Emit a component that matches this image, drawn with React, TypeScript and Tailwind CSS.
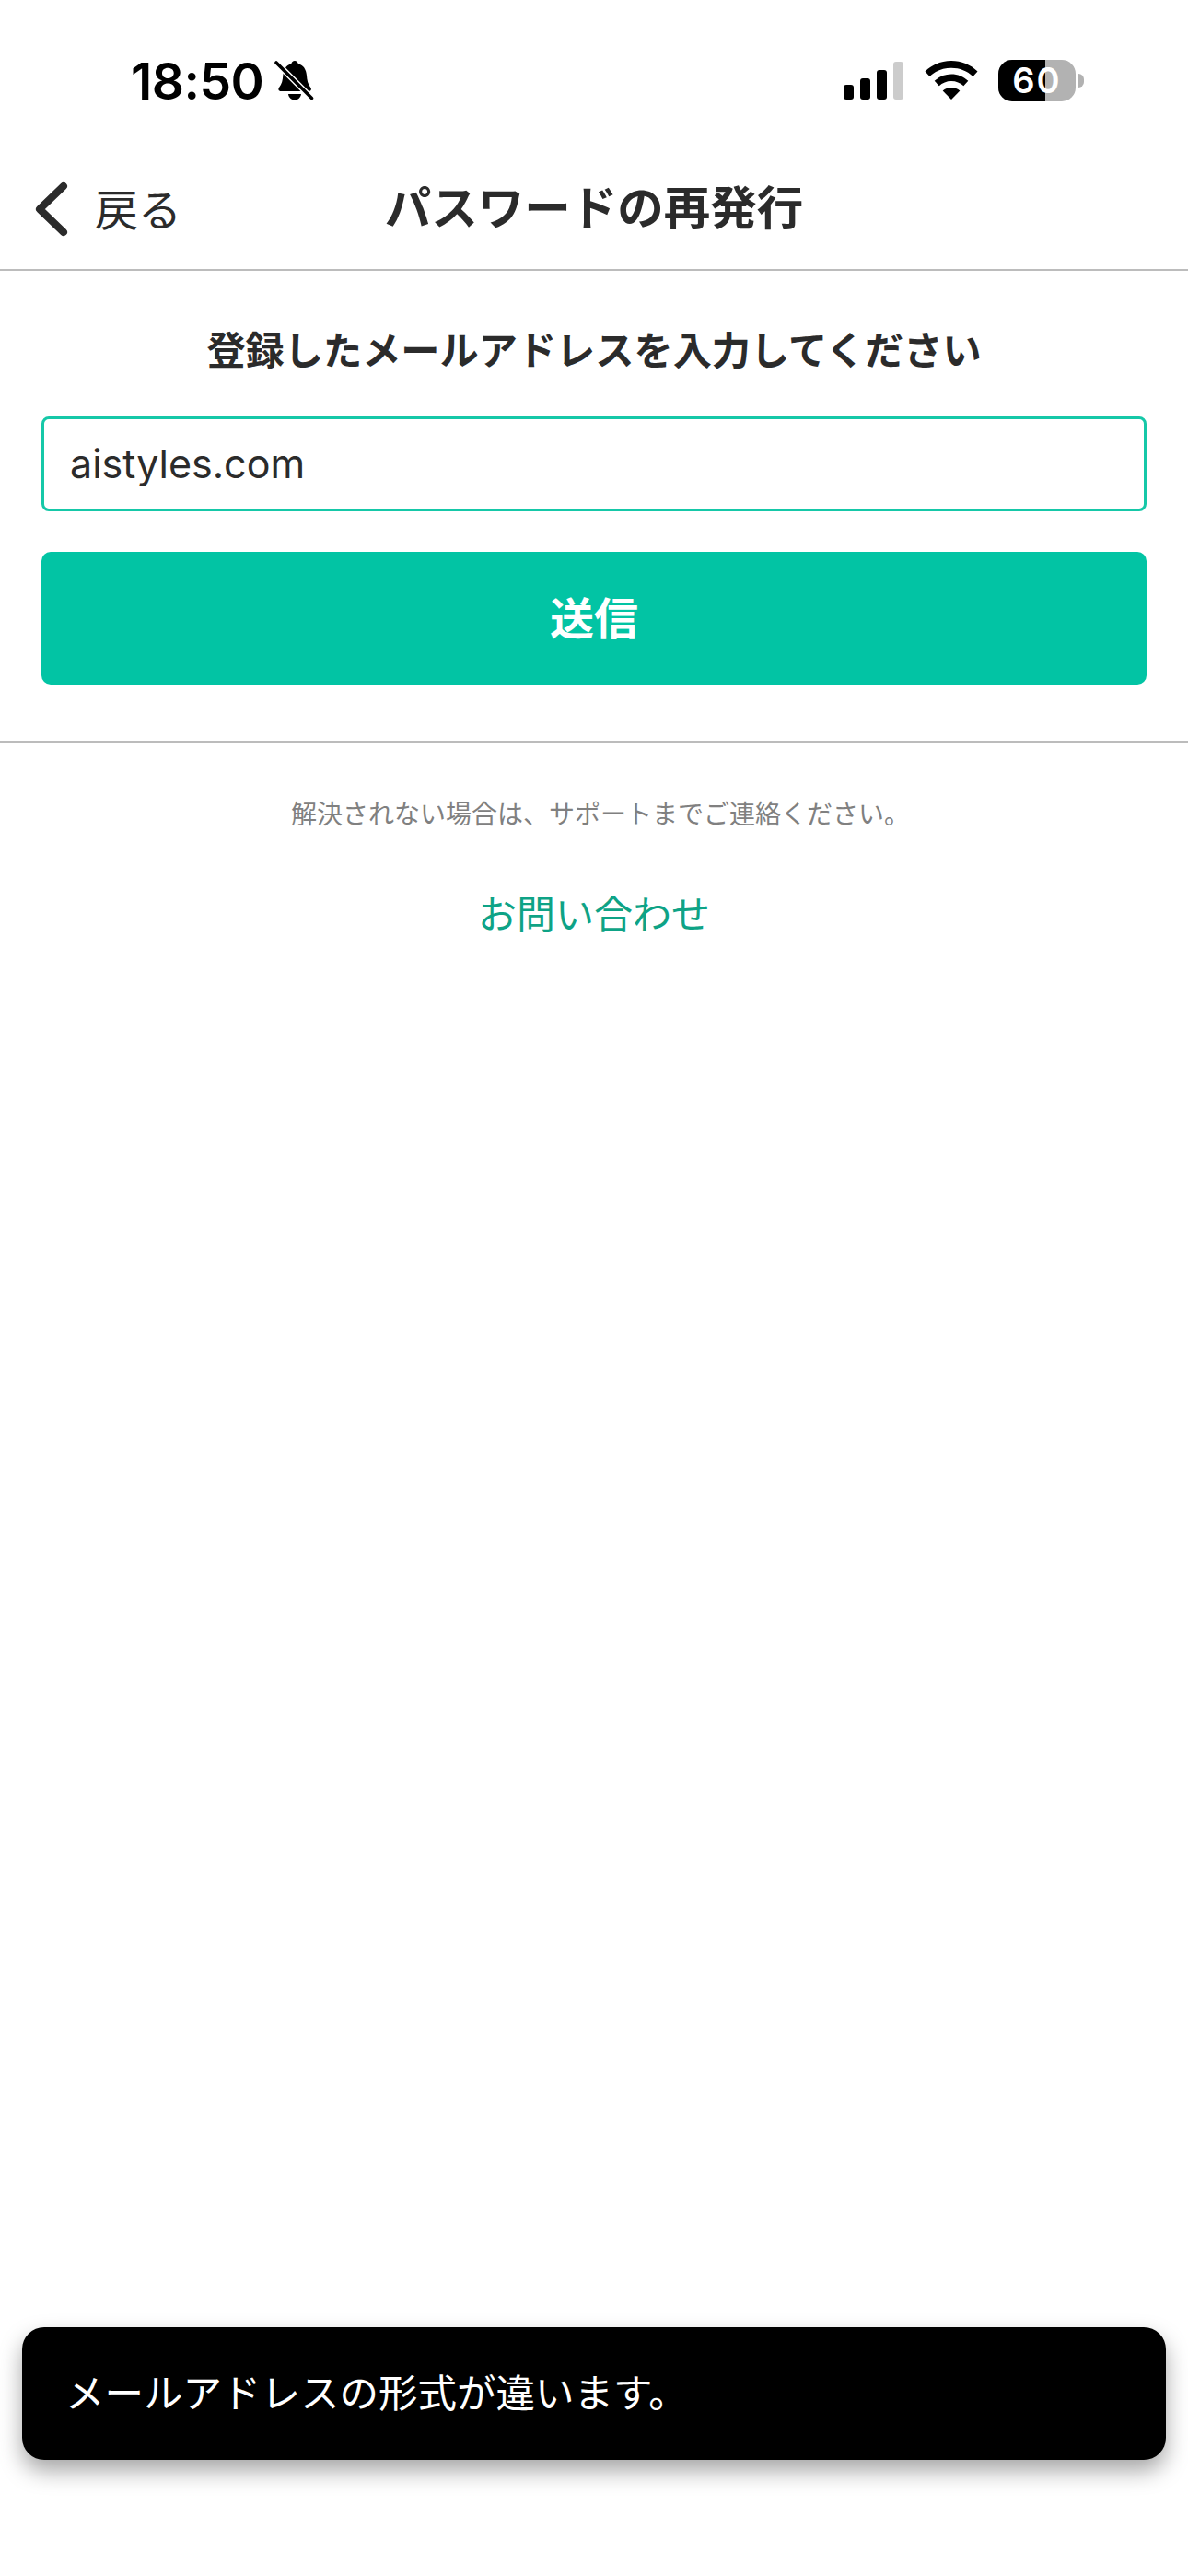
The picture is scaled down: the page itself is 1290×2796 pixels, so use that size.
import React from 'react';

const jp = 'font-["Inter","Noto_Sans_CJK_JP",sans-serif]';

const MutedBell = () => (
  <svg width="44" height="46" viewBox="0 0 44 46" className="text-black">
    <path
      d="M22 1c2 0 3.400 1.300 3.800 3.200 6 1.500 8.700 6.500 9.200 12.800.3 5 1.200 9 4.300 13 1.300 1.700.5 4-2 4H7c-2.500 0-3.300-2.300-2-4 3.100-4 4-8 4.300-13 .5-6.300 3.200-11.300 9-12.800C18.700 2.300 20 1 22 1z"
      fill="currentColor"
    />
    <path d="M15 37h14c-.6 4-3.400 6.500-7 6.500S15.600 41 15 37z" fill="currentColor" />
    <path d="M1 2l41 41" stroke="white" strokeWidth="6.500" />
    <path d="M2 3l38.500 38.500" stroke="currentColor" strokeWidth="3.600" strokeLinecap="round" />
  </svg>
);

const SignalBars = () => (
  <div className="flex items-end gap-[7px] mr-[1px]">
    <div className="w-[11px] h-[16px] rounded-[3px] bg-black" />
    <div className="w-[11px] h-[23px] rounded-[3px] bg-black" />
    <div className="w-[11px] h-[32px] rounded-[3px] bg-black" />
    <div className="w-[11px] h-[41px] rounded-[3px] bg-[#cccccc]" />
  </div>
);

const Wifi = () => (
  <svg width="58" height="42" viewBox="0 0 58 42">
    <path d="M29 0c11 0 21 4.200 28.500 11.500l-5 5.500C46.500 11 38 7.700 29 7.700S11.500 11 5.500 17L.5 11.500C8 4.200 18 0 29 0z" fill="black" />
    <path d="M29 14.500c7 0 13.400 2.700 18.300 7.300l-5 5.400c-3.500-3.200-8.200-5.200-13.300-5.200s-9.800 2-13.300 5.200l-5-5.400C15.600 17.200 22 14.500 29 14.500z" fill="black" />
    <path d="M29 29c3.700 0 7 1.300 9.300 3.500L29 42l-9.300-9.500C22 30.300 25.300 29 29 29z" fill="black" />
  </svg>
);

const Battery = () => (
  <div className="flex items-center gap-[3px]">
    <div className="relative w-[84px] h-[45px] rounded-[15px] overflow-hidden bg-[#b2b2b2] flex items-center justify-center">
      <div className="absolute left-0 top-0 bottom-0 w-[51px] bg-black" />
      <span className={`relative text-[38px] leading-none font-semibold tracking-[2px] text-white ${jp}`}>60</span>
    </div>
    <div className="w-[6px] h-[15px] rounded-r-full bg-[#b2b2b2]" />
  </div>
);

const App: React.FC = () => {
  return (
    <div className={`relative w-[1290px] h-[2796px] bg-white text-[#2b2b2b] ${jp}`}>
      {/* Status bar */}
      <div className="h-[170px] pt-[62px] pl-[142px] pr-[113px] flex items-start justify-between">
        <div className="flex items-center gap-[12px] h-[52px]">
          <span className="text-[55px] leading-none font-semibold text-black tracking-[-0.5px]">18:50</span>
          <MutedBell />
        </div>
        <div className="flex items-center gap-[22px] h-[50px]">
          <SignalBars />
          <Wifi />
          <Battery />
        </div>
      </div>

      {/* Nav */}
      <div className="relative h-[124px] border-b-2 border-[#bcbcbc] flex items-center justify-center pb-[10px]">
        <div className="absolute left-[38px] top-[27px] flex items-center gap-[29px]">
          <svg width="36" height="60" viewBox="0 0 36 60" fill="none">
            <path d="M31 5L5 30l26 25" stroke="#2b2b2b" strokeWidth="8" strokeLinecap="round" strokeLinejoin="round" />
          </svg>
          <span className="text-[47px] leading-none">戻る</span>
        </div>
        <h1 className="text-[50.500px] leading-none font-bold">パスワードの再発行</h1>
      </div>

      {/* Form */}
      <div className="px-[45px] pt-[66px] pb-[61px] border-b-2 border-[#bcbcbc]">
        <p className="text-[42.200px] leading-none font-bold text-center">登録したメールアドレスを入力してください</p>
        <div className="mt-[50px] h-[103px] rounded-[8px] border-[3px] border-[#16c8a8] flex items-center px-[28px]">
          <span className="text-[43px] leading-none">aistyles.com</span>
        </div>
        <div className="mt-[44px] h-[144px] rounded-[10px] bg-[#02c4a4] flex items-center justify-center">
          <span className="pt-[2px] text-[48px] leading-none font-bold text-white">送信</span>
        </div>
      </div>

      {/* Help */}
      <div className="pt-[64px] flex flex-col items-center">
        <p className="pl-[14px] text-[28px] leading-none text-[#808080]">解決されない場合は、サポートまでご連絡ください。</p>
        <p className="mt-[74px] text-[42px] leading-none text-[#0ea386]">お問い合わせ</p>
      </div>

      {/* Toast */}
      <div className="absolute left-[24px] top-[2526px] w-[1242px] h-[144px] rounded-[24px] bg-black flex items-center pl-[47px] shadow-[0_12px_24px_rgba(0,0,0,0.35)]">
        <span className="text-[42.500px] leading-none text-white">メールアドレスの形式が違います。</span>
      </div>
    </div>
  );
};

export default App;
